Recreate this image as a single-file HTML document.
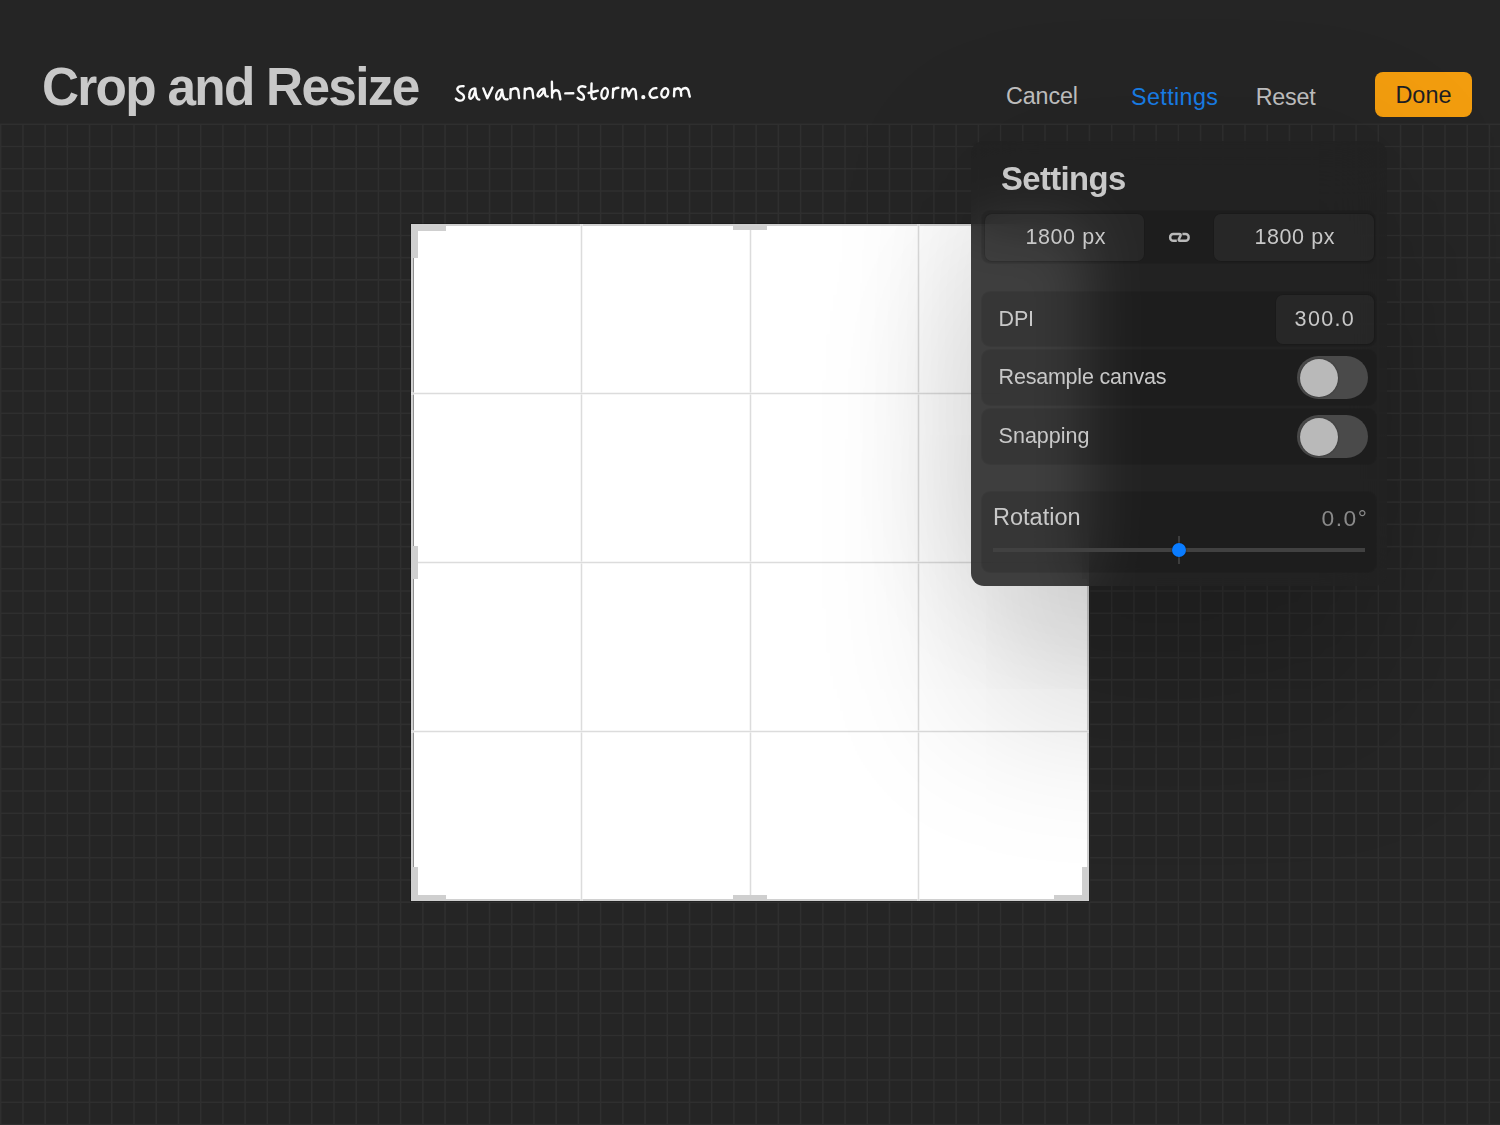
<!DOCTYPE html>
<html><head><meta charset="utf-8">
<style>
html,body{margin:0;padding:0;}
body{width:1500px;height:1125px;overflow:hidden;background:#252525;position:relative;font-family:"Liberation Sans",sans-serif;}
.abs{position:absolute;}
.t{position:absolute;white-space:nowrap;line-height:1;}
#grid{position:absolute;left:0;top:0;}
#canvas{position:absolute;left:411px;top:224px;width:677.5px;height:677px;background:#fff;box-sizing:border-box;border:2px solid #d0d0d0;box-shadow:0 0 0 1px rgba(0,0,0,0.22);}
.cl{position:absolute;background:#dcdcdc;}
.h{position:absolute;background:#cfcfcf;}
#panel{position:absolute;left:971px;top:141px;width:416px;height:445px;border-radius:13px;background:rgba(33,33,33,0.87);backdrop-filter:blur(30px);-webkit-backdrop-filter:blur(30px);box-shadow:0 10px 150px rgba(0,0,0,0.12),0 130px 160px rgba(0,0,0,0.15);}
.grp{position:absolute;background:rgba(0,0,0,0.12);border-radius:8px;box-shadow:0 0 0 1px rgba(0,0,0,0.07);}
.box{position:absolute;background:rgba(255,255,255,0.045);border-radius:7px;box-shadow:0 0 0 1px rgba(0,0,0,0.1);}
.tog{position:absolute;width:71px;height:43px;border-radius:22px;background:#4a4a4a;}
.knob{position:absolute;left:3px;top:2.5px;box-shadow:0 0 2px rgba(0,0,0,0.45);width:38px;height:38px;border-radius:50%;background:#b9b9b9;}
@supports not ((backdrop-filter:blur(1px)) or (-webkit-backdrop-filter:blur(1px))){#panel{background:linear-gradient(180deg,#222 0,#222 70px,rgba(34,34,34,0) 150px),linear-gradient(90deg,#3c3c3c 0,#373737 70px,#292929 140px,#222 180px);}}
</style></head><body>
<svg id="grid" width="1500" height="1125"><path d="M0.68 124V1125M22.90 124V1125M45.12 124V1125M67.34 124V1125M89.56 124V1125M111.78 124V1125M134.00 124V1125M156.22 124V1125M178.44 124V1125M200.66 124V1125M222.88 124V1125M245.10 124V1125M267.32 124V1125M289.54 124V1125M311.76 124V1125M333.98 124V1125M356.20 124V1125M378.42 124V1125M400.64 124V1125M422.86 124V1125M445.08 124V1125M467.30 124V1125M489.52 124V1125M511.74 124V1125M533.96 124V1125M556.18 124V1125M578.40 124V1125M600.62 124V1125M622.84 124V1125M645.06 124V1125M667.28 124V1125M689.50 124V1125M711.72 124V1125M733.94 124V1125M756.16 124V1125M778.38 124V1125M800.60 124V1125M822.82 124V1125M845.04 124V1125M867.26 124V1125M889.48 124V1125M911.70 124V1125M933.92 124V1125M956.14 124V1125M978.36 124V1125M1000.58 124V1125M1022.80 124V1125M1045.02 124V1125M1067.24 124V1125M1089.46 124V1125M1111.68 124V1125M1133.90 124V1125M1156.12 124V1125M1178.34 124V1125M1200.56 124V1125M1222.78 124V1125M1245.00 124V1125M1267.22 124V1125M1289.44 124V1125M1311.66 124V1125M1333.88 124V1125M1356.10 124V1125M1378.32 124V1125M1400.54 124V1125M1422.76 124V1125M1444.98 124V1125M1467.20 124V1125M1489.42 124V1125M0 124.30H1500M0 146.53H1500M0 168.75H1500M0 190.98H1500M0 213.20H1500M0 235.43H1500M0 257.65H1500M0 279.88H1500M0 302.10H1500M0 324.32H1500M0 346.55H1500M0 368.78H1500M0 391.00H1500M0 413.23H1500M0 435.45H1500M0 457.68H1500M0 479.90H1500M0 502.13H1500M0 524.35H1500M0 546.58H1500M0 568.80H1500M0 591.02H1500M0 613.25H1500M0 635.48H1500M0 657.70H1500M0 679.92H1500M0 702.15H1500M0 724.38H1500M0 746.60H1500M0 768.83H1500M0 791.05H1500M0 813.27H1500M0 835.50H1500M0 857.73H1500M0 879.95H1500M0 902.17H1500M0 924.40H1500M0 946.62H1500M0 968.85H1500M0 991.08H1500M0 1013.30H1500M0 1035.53H1500M0 1057.75H1500M0 1079.98H1500M0 1102.20H1500M0 1124.43H1500" stroke="#2f2f2f" stroke-width="1.6" fill="none"/></svg>

<div class="t" style="left:42px;top:60px;font-size:53.5px;font-weight:bold;color:#c8c8c8;letter-spacing:-1.8px;transform:scaleX(0.96);transform-origin:0 0;">Crop and Resize</div>

<svg class="abs" style="left:0;top:0;" width="1500" height="125" viewBox="0 0 1500 125"><g fill="none" stroke="#fafafa" stroke-width="2.4" stroke-linecap="round" stroke-linejoin="round">
<path d="M463.6 86.2C461 86 458 86.4 457.4 88.6C456.8 91 459.5 92.3 462.2 94C464.6 95.6 464.6 98.6 462.6 100C460.6 101.2 457.6 100.6 455.9 98.6"/>
<path d="M474.4 88.4C471.4 88.6 469.6 91.8 469.3 95.2C469 97.6 469.6 99 471.2 98.6C473.2 98 475 92.6 475.3 88.6M475.3 89.2C475.6 93 476 96.6 477 98.2C477.6 99.2 478.6 99.6 479.3 99.6"/>
<path d="M483.3 88.4L487.3 98.2L492.4 87.6"/>
<path d="M501.4 89.6C498.4 89.8 496.4 93.2 496.1 96.6C495.9 98.8 496.8 99.8 498.2 99.4C500.2 98.6 501.6 93.6 502.2 89.8M502.2 90.2C502.6 94 503 97 504.2 98.4C505 99.4 506.6 99.4 507.6 99.2"/>
<path d="M510.7 89.2L510.4 98.4M510.8 90.6C512 89 513.6 88.3 515.2 88.3C517.4 88.4 518.2 90 518.4 92C518.7 94.6 518.8 96.6 519.1 98"/>
<path d="M524.8 88.7L524.6 98.4M525 90.6C526.2 89 527.8 88.3 529.4 88.3C531.6 88.4 532.4 90 532.6 92C532.9 94.6 533 96.6 533.3 98"/>
<path d="M543.6 88.8C540.8 89 538.4 92 537.6 94.6C537.2 96.2 538.2 96.8 539.6 96.3C541.6 95.4 543.6 92 544.4 88.6M544.6 89.6C544.8 92.6 545 94.6 545.6 95.6C546.2 96.4 547 96.6 547.8 96.4"/>
<path d="M551.9 81.8L552.1 97.6M552.3 93.6C553.2 91.6 554.6 90.2 556 90.2C558 90.2 559 91.4 559.4 93.6C559.8 96 560 97.8 560.4 99.4"/>
<path d="M565.3 93.4L573.3 93.2"/>
<path d="M585.4 86.9C583.6 86.2 580.4 86 579 87.6C577.6 89.4 578.6 91.4 580.8 92.8C583.4 94.4 584.4 96.2 583.8 98.6C583.2 100.2 580.6 100.4 577.6 97.8"/>
<path d="M591.6 83.4C591.4 88 591.2 92.6 591.4 95.8C591.6 98.2 592.6 99.2 594 99C595 98.9 595.6 98.6 596 98.2M588.6 93C591.6 92.2 594.8 91.4 597.8 90.8"/>
<ellipse cx="604.6" cy="93.4" rx="3.1" ry="5.4" transform="rotate(12 604.6 93.4)"/>
<path d="M613.2 88.6L612.8 97.8M613.2 90.8C614.2 88.6 615.8 87.8 618.4 87.8"/>
<path d="M622.8 88.6L622.4 97.8M623 90.2C623.8 89 625 88.2 626 88.4C627 88.8 628 93 628.6 96.4C629.6 93 631 89.6 632.6 89C634.2 88.6 635.2 89.4 635.6 91.4C636 94 636 97 636.2 99"/>
<circle cx="643.3" cy="97.2" r="0.9" fill="#fafafa"/>
<path d="M656.4 88.2C654.6 88 652.6 88.6 651.2 90.2C649.6 92.2 649.4 95 650.6 96.6C652 98.2 654.8 98 657.2 97.2"/>
<ellipse cx="664.8" cy="92.9" rx="3.3" ry="4.7" transform="rotate(18 664.8 92.9)"/>
<path d="M674.4 88.8L674 96.4M674.6 90.4C675.6 88.8 676.6 88.2 677.8 88.2C679.6 88.3 680.6 89.6 680.9 91.6C681.1 93.4 681.2 94.8 681.2 95.8M681.2 90.4C682.4 88.8 683.8 88 685.2 88C687.2 88.1 688.2 89.4 688.6 91.4C689 93.6 689.4 95.2 689.8 96.6"/>
</g></svg>

<div class="t" style="left:1006px;top:85.4px;font-size:23.3px;letter-spacing:-0.1px;color:#c0c0c0;">Cancel</div>
<div class="t" style="left:1131px;top:85.5px;font-size:23.3px;letter-spacing:0.4px;color:#187ee8;">Settings</div>
<div class="t" style="left:1255.8px;top:85.7px;font-size:23.3px;letter-spacing:-0.25px;color:#c0c0c0;">Reset</div>
<div class="abs" style="left:1375px;top:72px;width:97px;height:45px;border-radius:8px;background:#f39d0e;"></div>
<div class="t" style="left:1395.4px;top:83.7px;font-size:23.5px;color:#1c1e24;">Done</div>

<div id="canvas"></div>
<div class="abs" style="left:413px;top:226px;width:0.9px;height:673px;background:#909090;"></div>
<div class="cl" style="left:581px;top:224px;width:1px;height:677px;box-shadow:-0.6px 0 0 #f0f0f0,0.6px 0 0 #f0f0f0;"></div>
<div class="cl" style="left:750px;top:224px;width:1px;height:677px;box-shadow:-0.6px 0 0 #f0f0f0,0.6px 0 0 #f0f0f0;"></div>
<div class="cl" style="left:918px;top:224px;width:1px;height:677px;box-shadow:-0.6px 0 0 #f0f0f0,0.6px 0 0 #f0f0f0;"></div>
<div class="cl" style="left:411px;top:393px;width:678px;height:1px;box-shadow:0 -0.6px 0 #f0f0f0,0 0.6px 0 #f0f0f0;"></div>
<div class="cl" style="left:411px;top:562px;width:678px;height:1px;box-shadow:0 -0.6px 0 #f0f0f0,0 0.6px 0 #f0f0f0;"></div>
<div class="cl" style="left:411px;top:731px;width:678px;height:1px;box-shadow:0 -0.6px 0 #f0f0f0,0 0.6px 0 #f0f0f0;"></div>
<div class="h" style="left:411px;top:224px;width:35px;height:6.5px;"></div>
<div class="h" style="left:411px;top:224px;width:6.8px;height:34px;"></div>
<div class="h" style="left:733.3px;top:224px;width:33.4px;height:6px;"></div>
<div class="h" style="left:411px;top:546px;width:6.6px;height:33px;"></div>
<div class="h" style="left:411px;top:867px;width:6.8px;height:34px;"></div>
<div class="h" style="left:411px;top:894.5px;width:35px;height:6.5px;"></div>
<div class="h" style="left:733.3px;top:895px;width:33.4px;height:6px;"></div>
<div class="h" style="left:1054px;top:894.5px;width:35px;height:6.5px;"></div>
<div class="h" style="left:1082.2px;top:867px;width:6.8px;height:34px;"></div>
<div class="h" style="left:1082.4px;top:546px;width:6.6px;height:33px;"></div>
<div class="h" style="left:1054px;top:224px;width:35px;height:6.5px;"></div>
<div class="h" style="left:1082.2px;top:224px;width:6.8px;height:34px;"></div>
<div id="panel"></div>
<div class="t" style="left:1001px;top:162.5px;font-size:32.8px;font-weight:bold;letter-spacing:-0.6px;color:#c8c8c8;">Settings</div>
<div class="grp" style="left:982px;top:211px;width:393px;height:52px;"></div>
<div class="box" style="left:985px;top:214px;width:159px;height:47px;"></div>
<div class="box" style="left:1214px;top:214px;width:160px;height:47px;"></div>
<div class="t" style="left:1025.5px;top:226.8px;font-size:21.5px;color:#c8c8c8;letter-spacing:0.58px;">1800 px</div>
<div class="t" style="left:1254.5px;top:226.8px;font-size:21.5px;color:#c8c8c8;letter-spacing:0.58px;">1800 px</div>
<svg class="abs" style="left:1160px;top:222px;" width="40" height="30" viewBox="1160 222 40 30"><path d="M1176.8 240.8H1173.2A3 3 0 0 1 1170.2 237.8V237.1A3 3 0 0 1 1173.2 234.1H1179.4Q1181.2 234.1 1180.5 235.8L1178.9 239.1Q1178.2 240.8 1180 240.8H1185.6A3 3 0 0 0 1188.6 237.8V237.1A3 3 0 0 0 1185.6 234.1H1182.4" fill="none" stroke="#b9b9b9" stroke-width="2.5"/></svg>
<div class="grp" style="left:982px;top:292px;width:394px;height:54px;"></div>
<div class="box" style="left:1276px;top:295px;width:98px;height:49px;"></div>
<div class="t" style="left:998.6px;top:308.8px;font-size:21.5px;color:#c8c8c8;letter-spacing:-0.2px;">DPI</div>
<div class="t" style="left:1294.6px;top:308.8px;font-size:21.5px;color:#c8c8c8;letter-spacing:1.35px;">300.0</div>
<div class="grp" style="left:982px;top:350px;width:394px;height:55px;"></div>
<div class="t" style="left:998.6px;top:367px;font-size:21.5px;color:#c8c8c8;letter-spacing:-0.22px;">Resample canvas</div>
<div class="tog" style="left:1297px;top:356px;"><div class="knob"></div></div>
<div class="grp" style="left:982px;top:408.5px;width:394px;height:55px;"></div>
<div class="t" style="left:998.6px;top:425.8px;font-size:21.5px;color:#c8c8c8;">Snapping</div>
<div class="tog" style="left:1297px;top:415px;"><div class="knob"></div></div>
<div class="grp" style="left:981.5px;top:492px;width:394.5px;height:79.5px;"></div>
<div class="t" style="left:993px;top:506px;font-size:23.5px;color:#c8c8c8;">Rotation</div>
<div class="t" style="left:1321.6px;top:506.6px;font-size:22.8px;color:#8a8a8a;letter-spacing:1.5px;">0.0&deg;</div>
<div class="abs" style="left:993px;top:548px;width:372px;height:3.5px;background:#414141;"></div>
<div class="abs" style="left:1178px;top:536px;width:2px;height:28px;background:#3d3d3d;"></div>
<div class="abs" style="left:1172px;top:543px;width:14px;height:14px;border-radius:50%;background:#0a7cff;box-shadow:0 0 2px rgba(0,0,0,0.6);"></div>

</body></html>
